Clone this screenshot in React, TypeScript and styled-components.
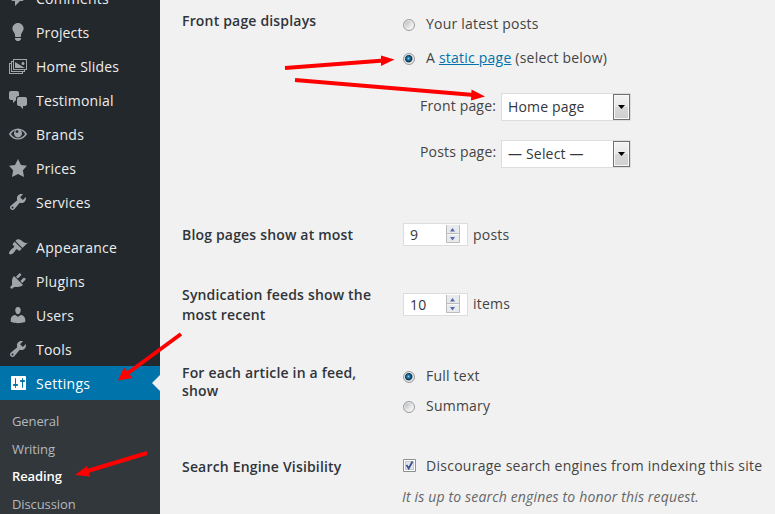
import React from "react";
import styled, { createGlobalStyle, css } from "styled-components";

const GlobalStyle = createGlobalStyle`
  * { box-sizing: border-box; }
  html, body { margin: 0; padding: 0; }
  body {
    background: #f1f1f1;
    font-family: "Open Sans", "Noto Sans", sans-serif;
    font-size: 14px;
    line-height: 20px;
    color: #444;
    overflow: hidden;
  }
`;

const Page = styled.div`
  position: relative;
  display: flex;
  width: 775px;
  height: 514px;
  overflow: hidden;
  background: #f1f1f1;
`;

const Sidebar = styled.nav`
  width: 160px;
  height: 514px;
  flex: none;
  overflow: hidden;
  background: #23282d;
`;

const MenuGroup = styled.ul<{ $first?: boolean }>`
  list-style: none;
  padding: 0;
  margin: ${(p) => (p.$first ? "-19px 0 11px" : "0")};
`;

const MenuItem = styled.li<{ $current?: boolean }>`
  display: flex;
  align-items: center;
  height: 34px;
  padding-left: 8px;
  gap: 8px;
  color: #eee;
  ${(p) =>
    p.$current &&
    css`
      background: #0073aa;
      color: #fff;
    `}
`;

const MenuIcon = styled.svg<{ $current?: boolean }>`
  width: 20px;
  height: 20px;
  flex: none;
  fill: ${(p) => (p.$current ? "#fff" : "#a0a5aa")};
`;

const MenuLabel = styled.span<{ $spacing?: number }>`
  flex: 1;
  padding-top: 1px;
  white-space: nowrap;
  letter-spacing: ${(p) => p.$spacing ?? 0.2}px;
`;

const Notch = styled.span`
  border: 8px solid transparent;
  border-left: 0;
  border-right-color: #f1f1f1;
`;

const SubMenu = styled.ul`
  list-style: none;
  margin: 0;
  height: 120px;
  padding: 8px 0 0 12px;
  background: #32373c;
`;

const SubItem = styled.li<{ $current?: boolean }>`
  height: 27.5px;
  line-height: 27px;
  font-size: 13px;
  letter-spacing: -0.1px;
  color: ${(p) => (p.$current ? "#fff" : "#b4b9be")};
  font-weight: ${(p) => (p.$current ? 600 : 400)};
`;

const Form = styled.main`
  flex: 1;
  padding-left: 22px;
`;

const FormRow = styled.section<{ $height: number }>`
  display: grid;
  grid-template-columns: 221px 1fr;
  height: ${(p) => p.$height}px;
`;

const Heading = styled.div<{ $top: number; $line?: number }>`
  padding-top: ${(p) => p.$top}px;
  line-height: ${(p) => p.$line ?? 20}px;
  letter-spacing: 0.18px;
  font-weight: 600;
  color: #2f343a;
  white-space: nowrap;
`;

const Field = styled.div<{ $top: number }>`
  padding-top: ${(p) => p.$top}px;
`;

const Choice = styled.label<{ $gap?: number }>`
  display: flex;
  align-items: center;
  height: 20px;
  margin-bottom: ${(p) => p.$gap ?? 0}px;
  white-space: nowrap;
`;

const ChoiceText = styled.span<{ $spacing?: number }>`
  margin-left: 11px;
  letter-spacing: ${(p) => p.$spacing ?? 0.22}px;
`;

const RadioDot = styled.span<{ $checked?: boolean }>`
  width: 12px;
  height: 12px;
  margin-top: 1px;
  flex: none;
  border: 1px solid #999b9d;
  border-radius: 50%;
  box-shadow: inset 0 0 0 1px #f0f0f0;
  background: ${(p) =>
    p.$checked
      ? "radial-gradient(circle at 4.5px 4.5px, #7fd0f4 0, #1f76a6 1.5px, #0d3655 3.2px, #5f7380 3.8px, #d4d8da 4.4px)"
      : "linear-gradient(135deg, #b9bcbf 15%, #dfe0e2 50%, #fafafa 85%)"};
`;

const Check = styled.svg`
  width: 13px;
  height: 13px;
  margin-top: -1px;
  margin-right: -1px;
  flex: none;
`;

const Link = styled.a`
  color: #0073aa;
  text-decoration: underline;
`;

const SelectRow = styled.div<{ $lift: number; $gap?: number }>`
  display: flex;
  height: 28px;
  margin-left: 17px;
  margin-bottom: ${(p) => p.$gap ?? 0}px;
  letter-spacing: 0.18px;
  > span {
    width: 81px;
    padding-top: ${(p) => p.$lift}px;
    white-space: nowrap;
  }
`;

const SelectBox = styled.div`
  display: flex;
  width: 130px;
  height: 28px;
  border: 1px solid #ddd;
  background: #fff;
  color: #32373c;
  padding-left: 6px;
  line-height: 26px;
  white-space: nowrap;
`;

const SelectValue = styled.span`
  flex: 1;
`;

const SelectButton = styled.span`
  display: flex;
  align-items: center;
  justify-content: center;
  width: 17px;
  height: 26px;
  border: 1px solid #707070;
  background: linear-gradient(#f3f3f3, #e8e8e8 48%, #d8d8d8 52%, #cfcfcf);
  box-shadow: inset 0 0 0 1px #f8f8f8;
`;

const NumberRow = styled.div`
  display: flex;
  letter-spacing: 0.2px;
`;

const NumberBox = styled.div`
  display: flex;
  width: 65px;
  height: 23px;
  margin-right: 5px;
  padding: 1px 7px 0 6px;
  border: 1px solid #ddd;
  background: #fff;
  color: #32373c;
  line-height: 20px;
  justify-content: space-between;
`;

const Unit = styled.span<{ $top: number }>`
  padding-top: ${(p) => p.$top}px;
`;

const Hint = styled.p`
  margin: 11px 0 0 -1px;
  font-style: italic;
  letter-spacing: 0.16px;
  color: #666;
  white-space: nowrap;
`;

const Annotations = styled.svg`
  position: absolute;
  inset: 0;
  width: 775px;
  height: 514px;
  pointer-events: none;
`;

const icons = {
  comments:
    "M5 2h9c1.1 0 2 .9 2 2v7c0 1.1-.9 2-2 2h-2l-5 5v-5H5c-1.1 0-2-.9-2-2V4c0-1.1.9-2 2-2z",
  bulb: "M10 1c3.11 0 5.63 2.52 5.63 5.62 0 1.84-2.03 4.58-2.03 4.58-.33.44-.6 1.25-.6 1.8v1c0 .55-.45 1-1 1H8c-.55 0-1-.45-1-1v-1c0-.55-.27-1.36-.6-1.8 0 0-2.02-2.74-2.02-4.58C4.38 3.52 6.89 1 10 1zM7 16.87V16h6v.87c0 .62-.13 1.13-.75 1.13H12c0 .62-.4 1-1.02 1h-2c-.61 0-.98-.38-.98-1h-.25c-.62 0-.75-.51-.75-1.13z",
  slides:
    "M5 3h14v11h-2v2h-2v2H1V7h2V5h2V3zm13 10V4H6v9h12zm-3-4c-.83 0-1.5-.67-1.5-1.5S14.17 6 15 6s1.5.67 1.5 1.5S15.83 9 15 9zM7 6l10 6H7V6zm7 11v-1H3V8H2v9h12zm2-2v-1H5V6H4v9h12z",
  chat: "M11 6h-.82C9.07 6 8 7.2 8 8.16V10l-3 3v-3H3c-1.1 0-2-.9-2-2V3c0-1.1.9-2 2-2h6c1.1 0 2 .9 2 2v3zm0 1h6c1.1 0 2 .9 2 2v5c0 1.1-.9 2-2 2h-2v3l-3-3h-1c-1.1 0-2-.9-2-2V9c0-1.1.9-2 2-2z",
  eye: "M18.8 9.5C17 6.5 13.7 4.4 10 4.4S3 6.5 1.2 9.5L1 10l.2.5C3 13.5 6.3 15.6 10 15.6s7-2.1 8.8-5.1L19 10zM10 14.2c-2.9 0-5.5-1.6-7-4.2 1-1.8 2.6-3.1 4.5-3.7C6.6 7 6 8.1 6 9.4c0 2.2 1.8 4 4 4s4-1.8 4-4c0-1.3-.6-2.4-1.5-3.1 1.9.6 3.5 1.9 4.5 3.7-1.5 2.6-4.1 4.2-7 4.2zM9 6.2c.9 0 1.5.6 1.5 1.4S9.9 9 9 9s-1.5-.6-1.5-1.4S8.1 6.2 9 6.2z",
  star: "M10 1l3 6 6 .75-4.12 4.62L16 19l-6-3-6 3 1.13-6.63L1 7.75 7 7z",
  wrench:
    "M16.68 9.77c-1.34 1.34-3.3 1.67-4.95.99l-5.41 6.52c-.99.99-2.59.99-3.58 0s-.99-2.59 0-3.57l6.52-5.42c-.68-1.65-.35-3.61.99-4.95 1.28-1.28 3.12-1.62 4.72-1.06l-2.89 2.89 2.82 2.82 2.86-2.87c.53 1.58.18 3.39-1.08 4.65zM3.81 16.21c.4.39 1.04.39 1.43 0 .4-.4.4-1.04 0-1.43-.39-.4-1.03-.4-1.43 0-.39.39-.39 1.03 0 1.43z",
  brush:
    "M14.48 11.06L7.41 3.99l1.5-1.5c.5-.56 2.3-.47 3.51.32 1.21.8 1.43 1.28 2.91 2.1 1.18.64 2.45 1.26 4.45.85zm-.71.71L6.7 4.7 4.93 6.47c-.39.39-.39 1.02 0 1.41l1.06 1.06c.39.39.39 1.03 0 1.42-.6.6-1.43 1.11-2.21 1.69-.35.26-.7.53-1.01.84C1.43 14.23.4 16.08 1.4 17.07c.99 1 2.84-.03 4.18-1.36.31-.31.58-.66.85-1.02.57-.78 1.08-1.61 1.69-2.21.39-.39 1.02-.39 1.41 0l1.06 1.06c.39.39 1.02.39 1.41 0z",
  plug: "M13.11 4.36L9.87 7.6 8 5.73l3.24-3.24c.35-.34 1.05-.2 1.56.32.52.51.66 1.21.31 1.55zm-8 1.77l.91-1.12 9.01 9.01-1.19.84c-.71.71-2.63 1.16-3.82 1.16H6.14L4.9 17.26c-.59.59-1.54.59-2.12 0-.59-.58-.59-1.53 0-2.12l1.24-1.24v-3.88c0-1.13.4-3.19 1.09-3.89zm7.26 3.97l3.24-3.24c.34-.35 1.04-.21 1.55.31.52.51.66 1.21.31 1.55l-3.24 3.25z",
  user: "M10 9.25c-2.27 0-2.73-3.44-2.73-3.44C7 4.02 7.82 2 9.97 2c2.16 0 2.98 2.02 2.71 3.81 0 0-.41 3.44-2.68 3.44zm0 2.57L12.72 10c2.39 0 4.52 2.33 4.52 4.53v2.49s-3.65 1.13-7.24 1.13c-3.65 0-7.24-1.13-7.24-1.13v-2.49c0-2.25 1.94-4.48 4.47-4.48z",
  sliders:
    "M18 16V4c0-.55-.45-1-1-1H4c-.55 0-1 .45-1 1v12c0 .55.45 1 1 1h13c.55 0 1-.45 1-1zM8 11h1c.55 0 1 .45 1 1s-.45 1-1 1H8v1.5c0 .28-.22.5-.5.5s-.5-.22-.5-.5V13H6c-.55 0-1-.45-1-1s.45-1 1-1h1V5.5c0-.28.22-.5.5-.5s.5.22.5.5V11zm6-2h-1c-.55 0-1-.45-1-1s.45-1 1-1h1V5.5c0-.28.22-.5.5-.5s.5.22.5.5V7h1c.55 0 1 .45 1 1s-.45 1-1 1h-1v5.5c0 .28-.22.5-.5.5s-.5-.22-.5-.5V9z",
};

type Entry = { icon: keyof typeof icons; label: string; current?: boolean; spacing?: number };

const contentMenu: Entry[] = [
  { icon: "comments", label: "Comments" },
  { icon: "bulb", label: "Projects", spacing: 0.12 },
  { icon: "slides", label: "Home Slides" },
  { icon: "chat", label: "Testimonial" },
  { icon: "eye", label: "Brands", spacing: 0.3 },
  { icon: "star", label: "Prices" },
  { icon: "wrench", label: "Services" },
];

const adminMenu: Entry[] = [
  { icon: "brush", label: "Appearance", spacing: 0.3 },
  { icon: "plug", label: "Plugins", spacing: 0.3 },
  { icon: "user", label: "Users" },
  { icon: "wrench", label: "Tools" },
  { icon: "sliders", label: "Settings", current: true, spacing: 0.3 },
];

function Menu({ items, first }: { items: Entry[]; first?: boolean }) {
  return (
    <MenuGroup $first={first}>
      {items.map((item) => (
        <MenuItem key={item.label} $current={item.current}>
          <MenuIcon viewBox="0 0 20 20" $current={item.current}>
            <path d={icons[item.icon]} fillRule="evenodd" />
          </MenuIcon>
          <MenuLabel $spacing={item.spacing}>{item.label}</MenuLabel>
          {item.current && <Notch />}
        </MenuItem>
      ))}
    </MenuGroup>
  );
}

function Select({ value }: { value: string }) {
  return (
    <SelectBox>
      <SelectValue>{value}</SelectValue>
      <SelectButton>
        <svg width="7" height="4" viewBox="0 0 7 4">
          <path d="M0 0h7L3.5 4z" fill="#000" />
        </svg>
      </SelectButton>
    </SelectBox>
  );
}

function NumberInput({ value, unit, unitTop }: { value: number; unit: string; unitTop: number }) {
  return (
    <NumberRow>
      <NumberBox>
        {value}
        <svg width="14" height="18" viewBox="0 0 14 18">
          <path d="M0 0h14v18H0z" fill="#e9eaec" />
          <path d="M.5 0v17.5h13V0M0 8.5h14" fill="none" stroke="#b9bbbd" />
          <path d="M1 9.5h12" stroke="#fafafa" />
          <path d="M4 6.500h5L6.500 3zM4 12h5l-2.500 3.500z" fill="#5468ae" />
        </svg>
      </NumberBox>
      <Unit $top={unitTop}>{unit}</Unit>
    </NumberRow>
  );
}

function Arrow({ line, head }: { line: string; head: string }) {
  return (
    <g>
      <path d={line} stroke="#f00" strokeWidth="4" fill="none" />
      <path d={head} fill="#f00" />
    </g>
  );
}

export default function App() {
  return (
    <Page>
      <GlobalStyle />
      <Sidebar>
        <Menu items={contentMenu} first />
        <Menu items={adminMenu} />
        <SubMenu>
          <SubItem>General</SubItem>
          <SubItem>Writing</SubItem>
          <SubItem $current>Reading</SubItem>
          <SubItem>Discussion</SubItem>
        </SubMenu>
      </Sidebar>
      <Form>
        <FormRow $height={210}>
          <Heading $top={11}>Front page displays</Heading>
          <Field $top={14}>
            <Choice $gap={14}>
              <RadioDot />
              <ChoiceText>Your latest posts</ChoiceText>
            </Choice>
            <Choice $gap={25}>
              <RadioDot $checked />
              <ChoiceText>
                A <Link>static page</Link> (select below)
              </ChoiceText>
            </Choice>
            <SelectRow $lift={3} $gap={19}>
              <span>Front page:</span>
              <Select value="Home page" />
            </SelectRow>
            <SelectRow $lift={2}>
              <span>Posts page:</span>
              <Select value="— Select —" />
            </SelectRow>
          </Field>
        </FormRow>
        <FormRow $height={70}>
          <Heading $top={15}>Blog pages show at most</Heading>
          <Field $top={13}>
            <NumberInput value={9} unit="posts" unitTop={2} />
          </Field>
        </FormRow>
        <FormRow $height={80}>
          <Heading $top={5}>
            Syndication feeds show the
            <br />
            most recent
          </Heading>
          <Field $top={13}>
            <NumberInput value={10} unit="items" unitTop={1} />
          </Field>
        </FormRow>
        <FormRow $height={90}>
          <Heading $top={4} $line={18}>
            For each article in a feed,
            <br />
            show
          </Heading>
          <Field $top={6}>
            <Choice $gap={10}>
              <RadioDot $checked />
              <ChoiceText>Full text</ChoiceText>
            </Choice>
            <Choice>
              <RadioDot />
              <ChoiceText>Summary</ChoiceText>
            </Choice>
          </Field>
        </FormRow>
        <FormRow $height={64}>
          <Heading $top={7}>Search Engine Visibility</Heading>
          <Field $top={6}>
            <Choice>
              <Check viewBox="0 0 13 13">
                <path d="M.5.5h12v12H.5z" fill="#fff" stroke="#8e8f8f" />
                <path d="M2.5 2.5h8v8h-8z" fill="#e4e7ea" stroke="#c2c6cb" />
                <path d="M3.5 6l2.2 3.5L9.5 2.5" fill="none" stroke="#3f4f97" strokeWidth="1.8" />
              </Check>
              <ChoiceText $spacing={0.27}>
                Discourage search engines from indexing this site
              </ChoiceText>
            </Choice>
            <Hint>It is up to search engines to honor this request.</Hint>
          </Field>
        </FormRow>
      </Form>
      <Annotations viewBox="0 0 775 514">
        <Arrow line="M285 68L384 60.5" head="M394.5 59.5L381 55.5V66z" />
        <Arrow line="M295 80L474 95" head="M485 96.5L471.5 89.5L471 100.5z" />
        <Arrow line="M181 334L128 373" head="M118 380.5L124 367.5L132.5 378z" />
        <Arrow line="M147 453L86 471.5" head="M75 475L87 466L90 476.5z" />
      </Annotations>
    </Page>
  );
}
